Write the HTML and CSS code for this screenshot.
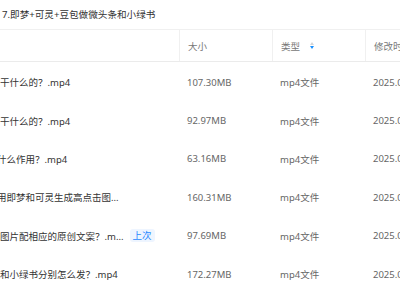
FILE: index.html
```html
<!DOCTYPE html>
<html lang="zh-CN">
<head>
    <meta charset="UTF-8">
    <title>文件列表</title>
    <link rel="stylesheet" href="styles.css">
</head>
<body>
    <div class="folder-title">7.即梦+可灵+豆包做微头条和小绿书</div>

    <div class="file-table">
        <div class="head-row">
            <div class="head-cell col-name"></div>
            <div class="head-cell">大小</div>
            <div class="head-cell">类型
                <span class="sorter">
                    <span class="arrow-up"></span>
                    <span class="arrow-down"></span>
                </span>
            </div>
            <div class="head-cell">修改时间</div>
        </div>

        <div class="row">
            <div class="cell col-name">干什么的？.mp4</div>
            <div class="cell">107.30MB</div>
            <div class="cell">mp4文件</div>
            <div class="cell">2025.03.18 14:22</div>
        </div>
        <div class="row">
            <div class="cell col-name">干什么的？.mp4</div>
            <div class="cell">92.97MB</div>
            <div class="cell">mp4文件</div>
            <div class="cell">2025.03.18 14:22</div>
        </div>
        <div class="row">
            <div class="cell col-name clipped">什么作用？.mp4</div>
            <div class="cell">63.16MB</div>
            <div class="cell">mp4文件</div>
            <div class="cell">2025.03.18 14:22</div>
        </div>
        <div class="row">
            <div class="cell col-name clipped">用即梦和可灵生成高点击图...</div>
            <div class="cell">160.31MB</div>
            <div class="cell">mp4文件</div>
            <div class="cell">2025.03.18 14:22</div>
        </div>
        <div class="row">
            <div class="cell col-name">图片配相应的原创文案？.m... <span class="tag">上次</span></div>
            <div class="cell">97.69MB</div>
            <div class="cell">mp4文件</div>
            <div class="cell">2025.03.18 14:22</div>
        </div>
        <div class="row">
            <div class="cell col-name">和小绿书分别怎么发？.mp4</div>
            <div class="cell">172.27MB</div>
            <div class="cell">mp4文件</div>
            <div class="cell">2025.03.18 14:22</div>
        </div>
    </div>
</body>
</html>
```

FILE: styles.css
```css
body {
    margin: 0;
    width: 400px;
    height: 300px;
    overflow: hidden;
    background: #fff;
    font-family: "Noto Sans", "Noto Sans CJK SC", sans-serif;
    font-size: 9.5px;
    color: #333;
}
.folder-title {
    height: 29px;
    line-height: 30px;
    padding-left: 2px;
    font-size: 9.6px;
    color: #333;
    white-space: nowrap;
}
.file-table {
    width: 600px;
}
.head-row,
.row {
    display: grid;
    grid-template-columns: 179px 93px 93px 235px;
}
.head-row {
    height: 31px;
    border-top: 1px solid #f0f0f0;
    border-bottom: 1px solid #ebebeb;
    margin-bottom: 1px;
}
.head-cell {
    display: flex;
    align-items: center;
    padding-left: 8px;
    border-left: 1px solid #f0f0f0;
    color: #777;
    white-space: nowrap;
}
.head-cell.col-name {
    border-left: none;
}
.sorter {
    display: inline-flex;
    flex-direction: column;
    gap: 1px;
    margin-left: 10px;
}
.arrow-up {
    width: 0;
    height: 0;
    border-left: 2.5px solid transparent;
    border-right: 2.5px solid transparent;
    border-bottom: 3px solid #d6d6d6;
}
.arrow-down {
    width: 0;
    height: 0;
    border-left: 2.5px solid transparent;
    border-right: 2.5px solid transparent;
    border-top: 3px solid #1890ff;
}
.row {
    height: 38.4px;
}
.cell {
    display: flex;
    align-items: center;
    padding-left: 8px;
    color: #666;
    white-space: nowrap;
    overflow: hidden;
}
.cell.col-name {
    padding-left: 0;
    color: #333;
}
.cell.clipped {
    text-indent: -3px;
}
.tag {
    margin-left: 6px;
    padding: 0 3px;
    height: 13px;
    line-height: 13px;
    border-radius: 3px;
    background: #eef5ff;
    color: #1e88ff;
    font-size: 9.5px;
}
```
